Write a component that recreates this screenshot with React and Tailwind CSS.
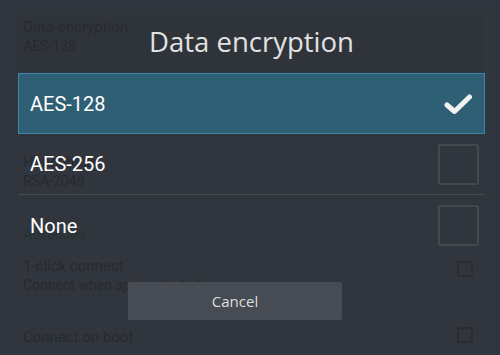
export default function App() {
  const bgText = "text-[#262a30]";
  return (
    <div className="relative w-[500px] h-[355px] overflow-hidden bg-[#31363e]" style={{ fontFamily: "Roboto, 'Noto Sans', sans-serif" }}>
      {/* background settings list */}
      <div className="flex flex-col">
        <div className="mt-[14px] mx-[17px] h-[57px] flex flex-col pt-[3px] pl-[6px] bg-[#2f343b]">
          <div className={`text-[15px] leading-[20px] ${bgText}`}>Data encryption</div>
          <div className={`text-[14px] leading-[18px] ${bgText}`}>AES-128</div>
        </div>
        <div className="pl-[23px] pr-[27px] flex flex-col">
          <div className="h-[67px] flex flex-col pt-[15px]">
            <div className={`text-[15px] leading-[20px] ${bgText}`}>Data authentication</div>
            <div className={`text-[14px] leading-[18px] ${bgText}`}>SHA1</div>
          </div>
          <div className="h-[56px] flex flex-col pt-[14px]">
            <div className={`text-[15px] leading-[20px] ${bgText}`}>Handshake</div>
            <div className={`text-[14px] leading-[18px] ${bgText}`}>RSA-2048</div>
          </div>
          <div className="h-[57px] flex items-center pt-[24px]">
            <div className="text-[14px] text-[#243530]">Advanced</div>
          </div>
          <div className="h-[75px] flex items-start justify-between pt-[5px]">
            <div className="flex flex-col">
              <div className={`text-[15px] leading-[20px] ${bgText}`}>1-click connect</div>
              <div className={`text-[14px] leading-[18px] ${bgText}`}>Connect when app is started</div>
            </div>
            <div className="mt-[5px] w-[16px] h-[16px] border-2 border-[#292d33] rounded-[2px]" />
          </div>
          <div className="flex items-start justify-between pt-[1px]">
            <div className={`text-[15px] leading-[20px] ${bgText}`}>Connect on boot</div>
            <div className="mt-[0px] w-[16px] h-[16px] border-2 border-[#292d33] rounded-[2px]" />
          </div>
        </div>
      </div>

      {/* dialog overlay */}
      <div className="absolute inset-0 flex flex-col pl-[18px] pr-[15px]">
        <div className="h-[73px] flex items-center justify-center pt-[11px]">
          <div className="text-[27.5px] leading-[32px] text-[#e2e2e2]" style={{ fontFamily: "'Open Sans', 'Noto Sans', sans-serif" }}>Data encryption</div>
        </div>
        <div className="h-[61px] flex items-center justify-between pl-[11px] pr-[11px] bg-[#2f5f75] border border-[#3a87a7]">
          <div className="text-[20px] text-white">AES-128</div>
          <svg width="30" height="24" viewBox="0 0 30 24">
            <path d="M4 13 L11.5 19.5 L26.5 5" fill="none" stroke="#f2f2f2" strokeWidth="5" strokeLinecap="round" strokeLinejoin="round" />
          </svg>
        </div>
        <div className="h-[60px] flex items-center justify-between pl-[12px] pr-[6px]">
          <div className="text-[20px] text-white">AES-256</div>
          <div className="w-[41px] h-[41px] border-2 border-[#444950] rounded-[2px]" />
        </div>
        <div className="h-[1px] bg-[#474c53]" />
        <div className="h-[61px] flex items-center justify-between pl-[12px] pr-[6px]">
          <div className="text-[20px] text-white">None</div>
          <div className="w-[41px] h-[41px] border-2 border-[#444950] rounded-[2px]" />
        </div>
        <div className="flex pt-[26px] pl-[110px]">
          <div className="w-[214px] h-[38px] bg-[#474c54] rounded-[2px] flex items-center justify-center">
            <span className="text-[15px] text-[#dedede]" style={{ fontFamily: "'Open Sans', 'Noto Sans', sans-serif" }}>Cancel</span>
          </div>
        </div>
      </div>
    </div>
  );
}
